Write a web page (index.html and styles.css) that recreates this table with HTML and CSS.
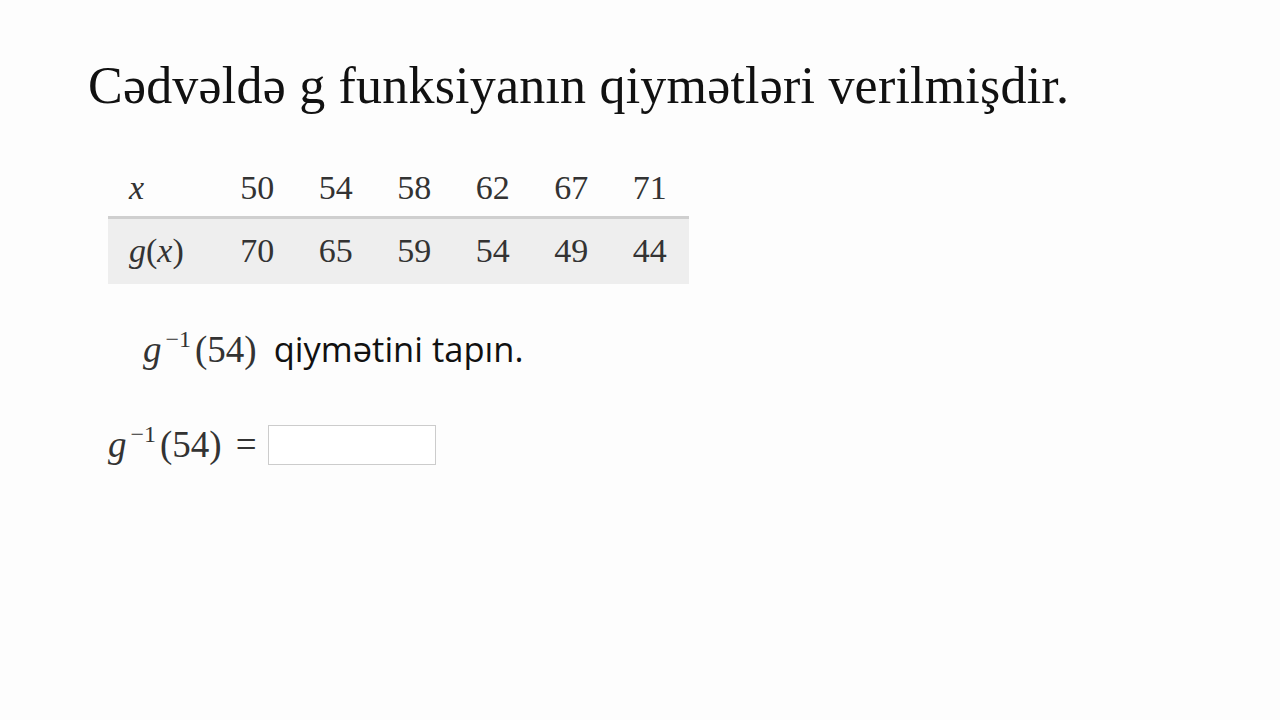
FILE: index.html
```html
<!DOCTYPE html>
<html lang="az">
<head>
<meta charset="utf-8">
<link rel="stylesheet" href="styles.css">
</head>
<body>
<main class="slide">
  <h1 class="title">Cədvəldə g funksiyanın qiymətləri verilmişdir.</h1>
  <div class="table">
    <div class="row head">
      <span class="cell label"><i>x</i></span>
      <span class="cell">50</span><span class="cell">54</span><span class="cell">58</span>
      <span class="cell">62</span><span class="cell">67</span><span class="cell">71</span>
    </div>
    <div class="row body">
      <span class="cell label"><i>g</i>(<i>x</i>)</span>
      <span class="cell">70</span><span class="cell">65</span><span class="cell">59</span>
      <span class="cell">54</span><span class="cell">49</span><span class="cell">44</span>
    </div>
  </div>
  <p class="prompt"><span class="math"><i>g</i><sup>−1</sup>(54)</span><span class="text">qiymətini tapın.</span></p>
  <div class="answer">
    <span class="math"><i>g</i><sup>−1</sup>(54)<span class="eq">=</span></span>
    <span class="box"></span>
  </div>
</main>
</body>
</html>
```
FILE: styles.css
```css
html, body { margin: 0; padding: 0; }
body {
  background: #fdfdfd;
  width: 1280px;
  height: 720px;
  overflow: hidden;
}
.slide {
  padding: 56px 0 0 88px;
}
.title {
  margin: 0;
  font-family: "Liberation Serif", "DejaVu Serif", serif;
  font-weight: normal;
  font-size: 52px;
  line-height: 60px;
  color: #111;
  letter-spacing: 0.2px;
}
.table {
  margin: 47px 0 0 20px;
  width: 581px;
  font-family: "Liberation Serif", "DejaVu Serif", serif;
  font-size: 34px;
  color: #333;
}
.row {
  display: grid;
  grid-template-columns: 110px repeat(6, 1fr);
  align-items: center;
}
.row.head {
  height: 53px;
  padding-bottom: 4px;
  box-sizing: border-box;
  border-bottom: 3px solid #cfcfcf;
  height: 56px;
}
.row.body {
  height: 65px;
  padding-bottom: 2px;
  box-sizing: border-box;
  background: #eeeeee;
}
.cell { text-align: center; }
.cell.label { text-align: left; padding-left: 21px; }
.prompt {
  margin: 41px 0 0 55px;
  display: flex;
  align-items: baseline;
  gap: 17px;
}
.math {
  font-family: "Liberation Serif", "DejaVu Serif", serif;
  font-size: 37px;
  color: #333;
}
.math i { margin-right: 4px; }
.math sup { font-size: 24px; vertical-align: 15px; line-height: 0; margin-right: 4px; }
.eq { margin-left: 14px; }
.text {
  font-family: "Open Sans", "Noto Sans", sans-serif;
  font-size: 34.5px;
  color: #111;
}
.answer {
  margin: 51px 0 0 20px;
  display: flex;
  align-items: center;
  gap: 11px;
}
.box {
  width: 166px;
  height: 38px;
  border: 1px solid #cccccc;
  background: #fff;
}
```
